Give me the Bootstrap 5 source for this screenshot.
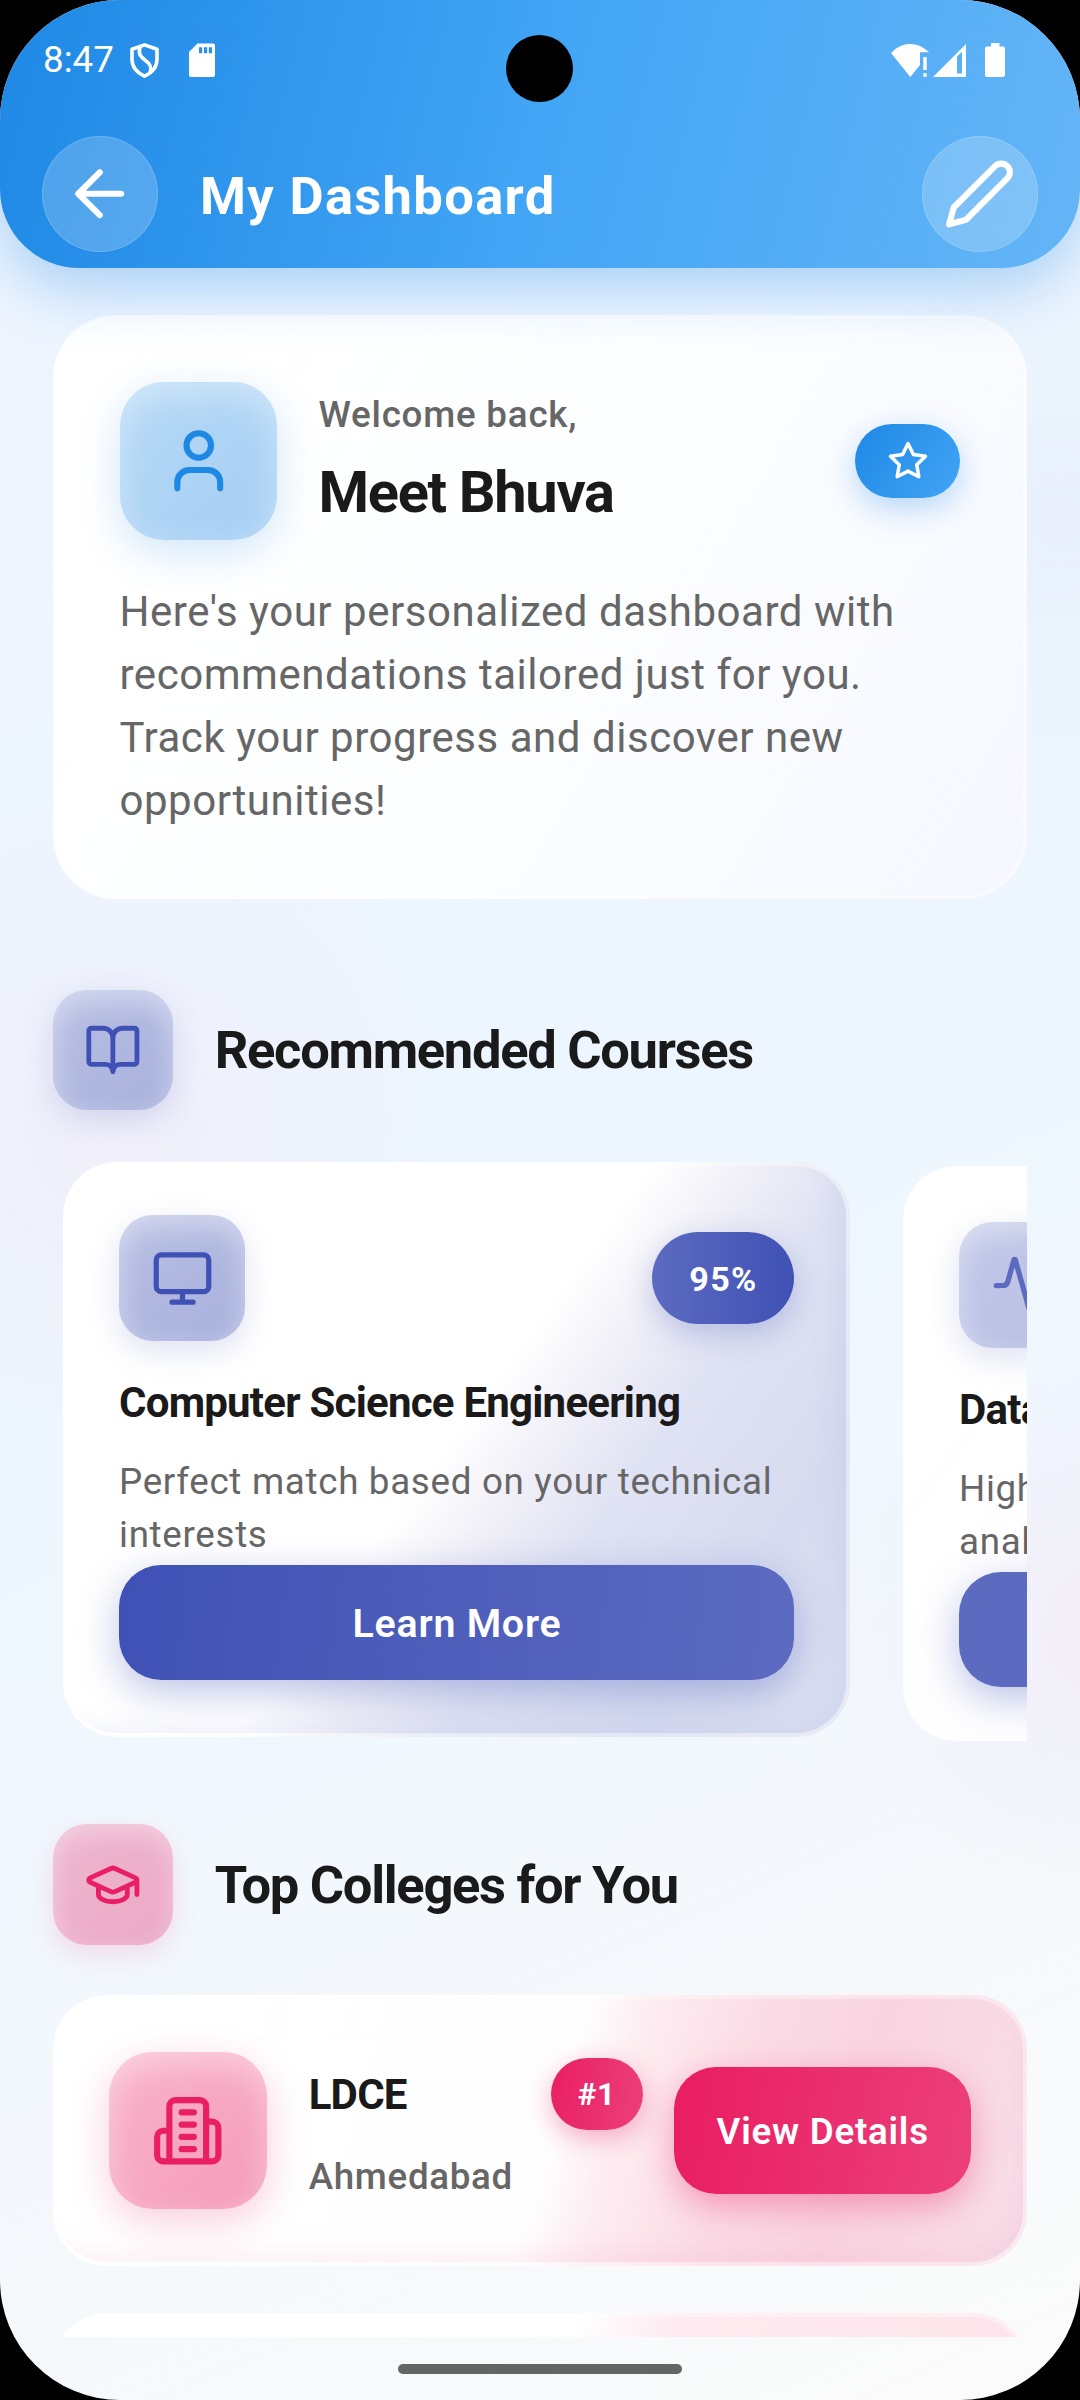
<!doctype html>
<html lang="en">
<head>
<meta charset="utf-8">
<meta name="viewport" content="width=device-width, initial-scale=1">
<title>My Dashboard</title>
<link href="https://cdn.jsdelivr.net/npm/bootstrap@5.3.0/dist/css/bootstrap.min.css" rel="stylesheet">
<style>
  body { background: #000; font-family: Roboto, "Noto Sans", sans-serif; width: 1080px; }
  svg { display: block; flex: none; }
  .ico { fill: none; stroke: currentColor; stroke-width: 2; stroke-linecap: round; stroke-linejoin: round; }

  .screen {
    width: 1080px; height: 2400px; border-radius: 120px; overflow: hidden;
    background:
      radial-gradient(circle 340px at 115px 1130px, rgba(243,232,246,.55), rgba(240,236,248,.4) 45%, rgba(240,236,248,0)),
      radial-gradient(circle 280px at 1110px 1630px, rgba(243,230,242,.65), rgba(240,235,247,.5) 40%, rgba(240,236,248,0)),
      radial-gradient(circle 270px at 1060px 520px, rgba(228,235,249,.6), rgba(232,240,251,.4) 45%, rgba(236,244,253,0)),
      linear-gradient(155.8deg, #eef4ff 0%, #edf6fe 50%, #f0f7ff 62%, #f4f8fc 76%, #fbfbfa 100%);
  }

  .app-header {
    height: 268px; z-index: 2; color: #fff;
    border-radius: 0 0 79px 79px;
    background: linear-gradient(103.9deg, #1e88e5, #42a5f5 50%, #64b5f6);
    box-shadow: 0 21px 58px rgba(30,136,229,.33);
  }
  .status-row { height: 120px; padding: 0 75px 0 43px; font-size: 36.75px; line-height: 44px; }
  .camera { width: 67px; height: 67px; left: 506px; top: 35px; background: #000; }
  .toolbar-row { margin-top: 16px; padding: 0 42px; }
  .round-btn { width: 116px; height: 116px; color: #fff; background: rgba(255,255,255,.2); border: 1px solid rgba(255,255,255,.16); }
  .screen-title { font-size: 52.5px; font-weight: 700; letter-spacing: 1.33px; line-height: 62px; margin: 0 0 0 42px; padding-top: 3px; }

  .feed { height: 2068.7px; padding: 47px 53px 0 52.5px; overflow: hidden; }
  .shell { border: 4px solid rgba(255,255,255,.35); background-origin: border-box; background-clip: border-box; }

  .welcome-card {
    height: 584px; padding: 63px; border-radius: 63px;
    background-image: linear-gradient(121deg, #fff 0%, #fdfeff 48%, #fafbff 72%, #f6f7fe 100%);
  }
  .icon-tile { flex: none; display: flex; align-items: center; justify-content: center; }
  .tile-xl { width: 157.5px; height: 157.5px; border-radius: 44px; }
  .tile-lg { width: 126px; height: 126px; border-radius: 34px; }
  .tile-md { width: 120.75px; height: 120.75px; border-radius: 34px; }
  .tile-blue { color: #1e88e5; background: linear-gradient(135deg, #b5d8f6, #a6cff4);
    box-shadow: inset 0 12px 36px rgba(255,255,255,.42), 0 12px 42px rgba(30,136,229,.2); }
  .tile-indigo { color: #3f51b5; background: linear-gradient(135deg, #b7bfe3, #a9b1de);
    box-shadow: inset 0 10px 28px rgba(255,255,255,.45), 0 10px 30px rgba(63,81,181,.17); }
  .tile-indigo.soft { color: #5c6bc0; background: linear-gradient(135deg, #c2c8e8, #b8c0e4); }
  .tile-rose { color: #e91e63; background: linear-gradient(135deg, #eeb7d0, #eca8c5);
    box-shadow: inset 0 8px 24px rgba(255,255,255,.38), 0 10px 26px rgba(233,30,99,.13); }
  .tile-pink { color: #e91e63; background: linear-gradient(135deg, #f9b3cb, #f59bba);
    box-shadow: inset 0 12px 32px rgba(255,255,255,.42), 0 12px 38px rgba(233,30,99,.22); }

  .greet { font-size: 36.75px; font-weight: 500; letter-spacing: .77px; line-height: 44px; color: #666; margin: 0 0 21px; }
  .user-name { font-size: 57.75px; font-weight: 700; letter-spacing: -1.31px; line-height: 68px; color: #1a1a1a; margin: 0 0 3px; }
  .star-pill { width: 105px; height: 73.5px; border-radius: 37px; background: linear-gradient(125deg, #1e88e5, #42a5f5);
    box-shadow: 0 10px 32px rgba(30,136,229,.32); }
  .intro { font-size: 42px; letter-spacing: .53px; line-height: 63px; color: #666; margin: 40px -20px 0 0; }

  .section-head { gap: 41.5px; }
  .section-head h2 { font-size: 52.5px; font-weight: 700; letter-spacing: -1.31px; line-height: 62px; color: #1a1a1a; margin: 0; }

  .course-strip { margin-top: 51.5px; padding-left: 10.5px; gap: 53px; overflow: hidden; }
  .course-card { width: 787px; height: 575.5px; flex: none; border-radius: 54px; padding: 49.5px 52px 0;
    background-image: linear-gradient(126.1deg, #fff 0%, #fff 49%, #f1f0f8 57%, #e0e3f3 66%, #d6dbef 82%, #dde1f2 100%);
    box-shadow: inset -22px -16px 22px -10px rgba(160,175,228,.16); }
  .course-card.tail { margin-top: 4px; padding-top: 52.5px; background-image: linear-gradient(126.1deg, #fff 0%, #fefeff 50%, #e0e3f3 65%);
    box-shadow: none; }
  .match-pill { width: 142px; height: 92px; border-radius: 46px; color: #fff; font-size: 34.125px; font-weight: 700; letter-spacing: 1.31px; padding: 2px 0 0 1px;
    background: linear-gradient(90deg, #5c6bc0, #3f51b5); box-shadow: 0 10px 30px rgba(63,81,181,.28); }
  .course-name { font-size: 42px; font-weight: 700; letter-spacing: -.77px; line-height: 50px; color: #1a1a1a; margin: 37px 0 26.5px; white-space: nowrap; }
  .course-note { font-size: 36.75px; letter-spacing: .69px; line-height: 53px; color: #666; margin: 0 0 4.5px; white-space: nowrap; }
  .cta { border: 0; border-radius: 42px; color: #fff; }
  .cta-indigo { height: 115px; font-size: 39.375px; font-weight: 600; letter-spacing: .76px; padding: 2px 0 0 1px;
    background: linear-gradient(97deg, #3f51b5, #5c6bc0); box-shadow: 0 12px 38px rgba(63,81,181,.34); }
  .tail .cta-indigo { background: #5c6bc0; }

  .college-card { height: 270.5px; border-radius: 54px; padding: 0 52.7px;
    background-image: linear-gradient(105.5deg, #fff 0%, #fefefe 51%, #fdebf0 58%, #fbdbe5 69%, #f9d4e0 80%, #f9dbe5 92%, #f6dfe9 100%);
    box-shadow: inset -16px -26px 24px -16px rgba(236,120,165,.1); }
  .college-card.next { background-image: linear-gradient(105.5deg, #fff 0%, #fff 50%, #feeaf0 60%, #fde2ea 100%); box-shadow: none; }
  .college-text { width: 334px; margin: 0 31px 0 42px; padding-bottom: 3px; }
  .college-name { font-size: 42px; font-weight: 700; letter-spacing: -.79px; line-height: 50px; color: #1a1a1a; margin: 0; padding-top: 2px; }
  .college-city { font-size: 36.75px; font-weight: 500; letter-spacing: .68px; line-height: 44px; color: #666; margin: 25.5px 0 0; }
  .rank-pill { width: 92px; height: 71.4px; border-radius: 36px; color: #fff; font-size: 31.5px; font-weight: 700; letter-spacing: .6px; padding: 2px 0 0;
    background: linear-gradient(100deg, #e91e63, #ec407a); box-shadow: 0 8px 26px rgba(233,30,99,.34); }
  .cta-pink { width: 297px; height: 126.5px; font-size: 36.75px; font-weight: 600; letter-spacing: .75px; padding: 3px 0 0 1px;
    background: linear-gradient(100deg, #e91e63 5%, #ec407a); box-shadow: 0 12px 34px rgba(233,30,99,.36); }

  .gesture-bar { width: 284px; height: 10px; margin: 27.3px auto 0; background: #646665; }
</style>
</head>
<body>
<div class="screen d-flex flex-column">

  <header class="app-header position-relative flex-shrink-0">
    <div class="status-row d-flex align-items-center">
      <span>8:47</span>
      <svg style="margin-left:16px" width="29" height="35" viewBox="0 0 29 35" fill="none" stroke="#fff" stroke-width="3.600" stroke-linejoin="round"><path d="M14.500 1.900 27 6.200V16c0 7.500-4.500 13.500-12.500 17.100C6.500 29.500 2 23.500 2 16V6.200Z"/><path d="M10 4c-2 7 .5 10 5.500 13.500 5 3.500 6.500 6.500 4.500 12"/></svg>
      <svg style="margin-left:30px" width="26" height="34" viewBox="0 0 26 34"><path fill="#fff" d="M8.500 .5H24a2 2 0 0 1 2 2V32a2 2 0 0 1-2 2H2a2 2 0 0 1-2-2V9Z"/><path fill="#2b90ea" d="M10 4.300h3.200v6H10zM15 4.300h3.200v6H15zM19.800 4.300H23v6h-3.200z"/></svg>
      <span class="ms-auto d-flex align-items-center">
        <svg width="38" height="33" viewBox="0 0 38 33" fill="#fff"><path d="M0 9C6 3 12 0 19.200 0S32 2.800 38 8.300H29V21l-9.700 12Z"/><path d="M32.300 13h3.400v13h-3.400zM32.300 29.300h3.400v3.500h-3.400z"/></svg>
        <svg style="margin-left:4px" width="33" height="33" viewBox="0 0 33 33"><path fill="#fff" fill-rule="evenodd" d="M33 0v33H0ZM24 12.500v17h5V7.800Z"/></svg>
        <svg style="margin-left:19px" width="20" height="34" viewBox="0 0 20 34"><path fill="#fff" d="M6 0h8.500v3.500H18a2 2 0 0 1 2 2V32a2 2 0 0 1-2 2H2a2 2 0 0 1-2-2V5.500a2 2 0 0 1 2-2h4Z"/></svg>
      </span>
    </div>
    <div class="camera position-absolute rounded-circle"></div>
    <div class="toolbar-row d-flex align-items-center">
      <button class="round-btn rounded-circle p-0 d-flex align-items-center justify-content-center" aria-label="Back">
        <svg class="ico" width="73.500" height="73.500" viewBox="0 0 24 24"><path d="m12 19-7-7 7-7M19 12H5"/></svg>
      </button>
      <h1 class="screen-title">My Dashboard</h1>
      <button class="round-btn rounded-circle p-0 ms-auto d-flex align-items-center justify-content-center" aria-label="Edit">
        <svg class="ico" width="73.500" height="73.500" viewBox="0 0 24 24"><path d="M17 3a2.828 2.828 0 1 1 4 4L7.500 20.500 2 22l1.500-5.500L17 3z"/></svg>
      </button>
    </div>
  </header>

  <main class="feed flex-shrink-0">

    <section class="welcome-card shell">
      <div class="d-flex align-items-center">
        <div class="icon-tile tile-xl tile-blue">
          <svg class="ico" width="73.500" height="73.500" viewBox="0 0 24 24"><path d="M19 21v-2a4 4 0 0 0-4-4H9a4 4 0 0 0-4 4v2"/><circle cx="12" cy="7" r="4"/></svg>
        </div>
        <div style="margin-left:41.500px">
          <p class="greet">Welcome back,</p>
          <p class="user-name">Meet Bhuva</p>
        </div>
        <div class="star-pill ms-auto text-white d-flex align-items-center justify-content-center">
          <svg class="ico" width="42" height="42" viewBox="0 0 24 24"><path d="m12 2 3.090 6.260L22 9.270l-5 4.870 1.180 6.880L12 17.770l-6.180 3.250L7 14.140 2 9.270l6.910-1.010z"/></svg>
        </div>
      </div>
      <p class="intro">Here's your personalized dashboard with<br>recommendations tailored just for you.<br>Track your progress and discover new<br>opportunities!</p>
    </section>

    <div class="section-head d-flex align-items-center" style="margin-top:90.500px">
      <div class="icon-tile tile-md tile-indigo">
        <svg class="ico" width="57.750" height="57.750" viewBox="0 0 24 24"><path d="M12 7v14"/><path d="M3 18a1 1 0 0 1-1-1V4a1 1 0 0 1 1-1h5a4 4 0 0 1 4 4 4 4 0 0 1 4-4h5a1 1 0 0 1 1 1v13a1 1 0 0 1-1 1h-6a3 3 0 0 0-3 3 3 3 0 0 0-3-3z"/></svg>
      </div>
      <h2>Recommended Courses</h2>
    </div>

    <div class="course-strip d-flex align-items-start">
      <article class="course-card shell">
        <div class="d-flex justify-content-between align-items-center">
          <div class="icon-tile tile-lg tile-indigo">
            <svg class="ico" width="63" height="63" viewBox="0 0 24 24"><rect x="2" y="3" width="20" height="14" rx="2"/><path d="M8 21h8M12 17v4"/></svg>
          </div>
          <span class="match-pill d-flex align-items-center justify-content-center">95%</span>
        </div>
        <h3 class="course-name">Computer Science Engineering</h3>
        <p class="course-note">Perfect match based on your technical<br>interests</p>
        <button class="cta cta-indigo w-100">Learn More</button>
      </article>
      <article class="course-card tail shell">
        <div class="d-flex justify-content-between align-items-center">
          <div class="icon-tile tile-lg tile-indigo soft">
            <svg class="ico" width="63" height="63" viewBox="0 0 24 24"><path d="M22 12h-2.480a2 2 0 0 0-1.930 1.460l-2.350 8.360a.25.25 0 0 1-.48 0L9.240 2.180a.25.25 0 0 0-.48 0l-2.350 8.360A2 2 0 0 1 4.490 12H2"/></svg>
          </div>
        </div>
        <h3 class="course-name">Data Science</h3>
        <p class="course-note">High compatibility with your<br>analytical skills</p>
        <button class="cta cta-indigo w-100" aria-label="Learn more about Data Science"></button>
      </article>
    </div>

    <div class="section-head d-flex align-items-center" style="margin-top:83px">
      <div class="icon-tile tile-md tile-rose">
        <svg class="ico" width="57.750" height="57.750" viewBox="0 0 24 24"><path d="M21.420 10.922a1 1 0 0 0-.019-1.838L12.830 5.180a2 2 0 0 0-1.660 0L2.600 9.080a1 1 0 0 0 0 1.832l8.570 3.908a2 2 0 0 0 1.660 0zM22 10v6M6 12.500V16a6 3 0 0 0 12 0v-3.500"/></svg>
      </div>
      <h2>Top Colleges for You</h2>
    </div>

    <section class="college-card shell d-flex align-items-center" style="margin-top:50px">
      <div class="icon-tile tile-xl tile-pink">
        <svg class="ico" width="73.500" height="73.500" viewBox="0 0 24 24"><path d="M6 22V4a2 2 0 0 1 2-2h8a2 2 0 0 1 2 2v18ZM6 12H4a2 2 0 0 0-2 2v6a2 2 0 0 0 2 2h2M18 9h2a2 2 0 0 1 2 2v9a2 2 0 0 1-2 2h-2M10 6h4M10 10h4M10 14h4M10 18h4"/></svg>
      </div>
      <div class="college-text flex-shrink-0">
        <div class="d-flex align-items-center justify-content-between">
          <h3 class="college-name">LDCE</h3>
          <span class="rank-pill d-flex align-items-center justify-content-center">#1</span>
        </div>
        <p class="college-city">Ahmedabad</p>
      </div>
      <button class="cta cta-pink flex-shrink-0">View Details</button>
    </section>

    <section class="college-card next shell" style="margin-top:47px"></section>
  </main>

  <div class="gesture-bar rounded-pill flex-shrink-0"></div>
</div>
<script src="https://cdn.jsdelivr.net/npm/bootstrap@5.3.0/dist/js/bootstrap.bundle.min.js"></script>
</body>
</html>
